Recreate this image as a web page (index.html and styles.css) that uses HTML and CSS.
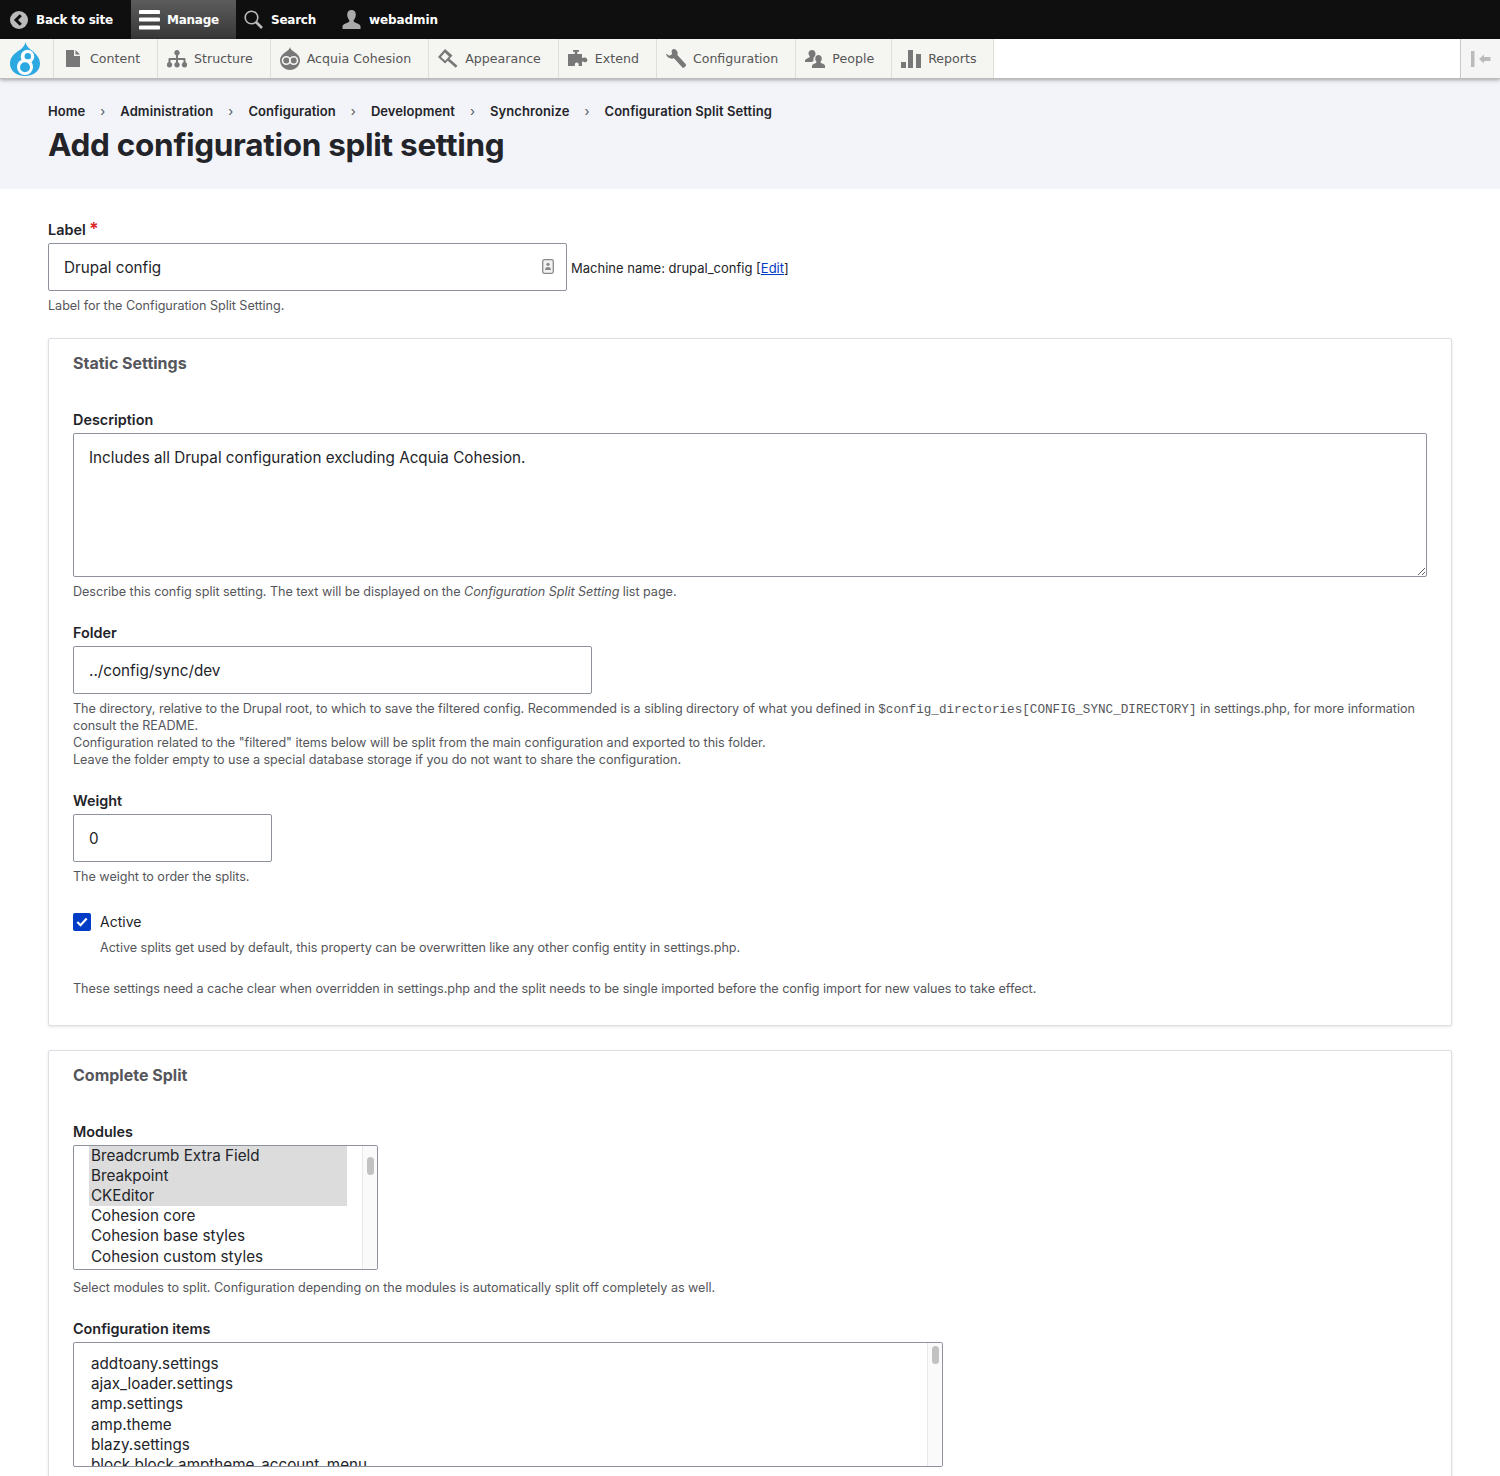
FILE: index.html
```html
<!DOCTYPE html>
<html lang="en">
<head>
    <meta charset="UTF-8">
    <meta name="viewport" content="width=device-width, initial-scale=1.0">
    <title>Add configuration split setting</title>
    <link rel="stylesheet" href="styles.css">
</head>
<body>
    <nav class="toolbar-bar">
        <a class="bar-item bar-back">
            <svg width="18" height="18" viewBox="0 0 18 18"><circle cx="9" cy="9" r="9" fill="#bbb"/><path d="M10.8 4.2 6 9l4.8 4.8" fill="none" stroke="#0f0f0f" stroke-width="3"/></svg>
            Back to site
        </a>
        <a class="bar-item bar-manage">
            <svg width="21" height="20" viewBox="0 0 21 20"><path d="M1.5 0h18a1.5 1.5 0 0 1 0 4h-18a1.5 1.5 0 0 1 0-4zM1.5 7.5h18a1.5 1.5 0 0 1 0 4h-18a1.5 1.5 0 0 1 0-4zM1.5 15.500h18a1.500 1.500 0 0 1 0 4h-18a1.500 1.500 0 0 1 0-4z" fill="#fff"/></svg>
            Manage
        </a>
        <a class="bar-item bar-search">
            <svg width="19" height="19" viewBox="0 0 19 19"><circle cx="7.500" cy="7.500" r="6.300" fill="none" stroke="#bbb" stroke-width="1.600"/><path d="m12 12 6 6" stroke="#bbb" stroke-width="2.600"/></svg>
            Search
        </a>
        <a class="bar-item bar-user">
            <svg width="19" height="20" viewBox="0 0 19 20"><path d="M9.500 0c2.700 0 4.300 2 4.300 4.800 0 2.300-1 4-2 5.200-.4.600-.3 1.500.4 1.900 2.500 1.200 5.800 2.300 6.300 4.100V19H.500v-3c.5-1.800 3.800-2.900 6.300-4.100.7-.4.800-1.300.4-1.900-1-1.200-2-2.900-2-5.200C5.200 2 6.800 0 9.500 0z" fill="#aaa"/></svg>
            webadmin
        </a>
    </nav>

    <nav class="toolbar-tray">
        <a class="tray-logo">
            <svg width="30" height="34" viewBox="0 0 30 34">
                <path d="M15.500 0c.6 4 3.500 6 7 9 3.700 3.200 7.500 7 7.500 12.500C30 28.800 23.500 34 15 34S0 28.800 0 21.500C0 15 5 11 9 8.500 12 6.500 14.800 4 15.500 0z" fill="#2ba9e0"/>
                <circle cx="17.500" cy="14.500" r="6.800" fill="#fff"/>
                <circle cx="17.800" cy="14.300" r="3.200" fill="#2ba9e0"/>
                <circle cx="15" cy="25" r="8" fill="#fff"/>
                <circle cx="15" cy="25.300" r="5" fill="#2ba9e0"/>
            </svg>
        </a>
        <a class="tray-item">
            <span class="tray-icon"><svg width="14" height="17" viewBox="0 0 14 17"><path d="M0 0h8v6h6v11H0zM9.500 0 14 4.500H9.500z" fill="#787878"/></svg></span>
            Content
        </a>
        <a class="tray-item">
            <span class="tray-icon"><svg width="20" height="18" viewBox="0 0 20 18"><path d="M10 0a2.700 2.700 0 0 1 1 5.200V8h6.500a1 1 0 0 1 1 1v3.300a2.700 2.700 0 1 1-2 0V10H11v2.300a2.700 2.700 0 1 1-2 0V10H3.500v2.300a2.700 2.700 0 1 1-2 0V9a1 1 0 0 1 1-1H9V5.200A2.700 2.700 0 0 1 10 0z" fill="#787878"/></svg></span>
            Structure
        </a>
        <a class="tray-item">
            <span class="tray-icon"><svg width="20" height="23" viewBox="0 0 20 23"><path d="M10 0c.5 2.500 2 3.500 4 4.800 3.500 2.200 6 5 6 8.200 0 5.700-4.500 10-10 10S0 18.700 0 13c0-3.200 2.500-6 6-8.200C8 3.500 9.500 2.500 10 0z" fill="#787878"/><circle cx="6.300" cy="13.500" r="3.800" fill="none" stroke="#f5f5f2" stroke-width="1.600"/><circle cx="13.700" cy="13.500" r="3.800" fill="none" stroke="#f5f5f2" stroke-width="1.600"/></svg></span>
            Acquia Cohesion
        </a>
        <a class="tray-item">
            <span class="tray-icon"><svg width="20" height="19" viewBox="0 0 20 19"><path d="M0 8 7 0l7.500 6.500-3 3.200 8 7-1.800 2-8-7-2.600 2.800zM3 8l4.200 3.700 3.800-4.300L6.800 3.600z" fill="#787878"/></svg></span>
            Appearance
        </a>
        <a class="tray-item">
            <span class="tray-icon"><svg width="20" height="18" viewBox="0 0 20 18"><path d="M5 0h6v1.800H9.300V4H14v3.500c.5 1.200 1.500-.5 3 0 2 .5 2.800 2.500 2.200 3.500-.7 1.500-3 1.500-4 .6-.5-.4-1.200-.2-1.200.4V16h-2.500c-1.500 0-.3-1.500-1-2.600-.8-1.200-2.900-1-3.500 0-.6 1.200.7 2.600-.5 2.600H0V4h6.700V1.800H5z" fill="#787878"/></svg></span>
            Extend
        </a>
        <a class="tray-item">
            <span class="tray-icon"><svg width="20" height="19" viewBox="0 0 20 19"><path d="M0 4.500 3.300 6.800 6 5.300 5.600 1.800 7 0c2.500-.2 4.300 1.400 4.600 3.600.1 1 0 1.600-.2 2.300L19.600 15c.6.700.5 1.600-.1 2.200l-1 1c-.7.700-1.700.7-2.300 0L8 9.300c-2 .7-4 .4-5.600-.8C1 7.500.2 6 0 4.500z" fill="#787878"/></svg></span>
            Configuration
        </a>
        <a class="tray-item">
            <span class="tray-icon"><svg width="20" height="18" viewBox="0 0 20 18"><path d="M7 0c2.200 0 3.500 1.700 3.500 3.700 0 1-.3 2-.8 2.700-1.200 1-1.600 2.500-1 4-.3.600-1 1-1.800 1.600H0v-1.700c.4-1.300 2.700-2 4.300-2.800.5-.3.500-1 .2-1.400-.7-.8-1-1.700-1-2.800C3.500 1.700 4.800 0 7 0zM13.500 5c2 0 3.300 1.600 3.300 3.500 0 1.300-.5 2.300-1.100 3.100-.3.500-.2 1.100.3 1.400 1.500.7 3.600 1.300 4 2.500V18H7v-2.500c.4-1.200 2.500-1.800 4-2.500.5-.3.600-.9.300-1.400-.6-.8-1.100-1.800-1.100-3.100C10.200 6.600 11.500 5 13.500 5z" fill="#787878"/></svg></span>
            People
        </a>
        <a class="tray-item">
            <span class="tray-icon"><svg width="20" height="18" viewBox="0 0 20 18"><path d="M0 12h5v6H0zM7 0h5v18H7zM15 4h5v14h-5z" fill="#787878"/></svg></span>
            Reports
        </a>
        <a class="tray-toggle">
            <svg width="20" height="16" viewBox="0 0 20 16"><path d="M0 0h3.500v16H0zM8 8l5-4.500V6h6.500v4H13v2.500z" fill="#bbb"/></svg>
        </a>
    </nav>

    <header class="page-header">
        <ol class="breadcrumb">
            <li>Home</li>
            <li>Administration</li>
            <li>Configuration</li>
            <li>Development</li>
            <li>Synchronize</li>
            <li>Configuration Split Setting</li>
        </ol>
        <h1>Add configuration split setting</h1>
    </header>

    <main class="content">
        <div class="form-item form-item-label">
            <label class="form-label">Label <span class="required">*</span></label>
            <div class="inline-field">
                <div class="input-wrap">
                    <input class="form-text form-text-wide" type="text" value="Drupal config">
                    <svg class="contact-icon" width="12" height="15" viewBox="0 0 12 15"><rect x=".7" y=".7" width="10.600" height="13.600" rx="1.500" fill="#f2f2f2" stroke="#8a8a8a" stroke-width="1.300"/><circle cx="6" cy="5.300" r="1.600" fill="#8a8a8a"/><path d="M3 11c0-2 1.300-3 3-3s3 1 3 3z" fill="#8a8a8a"/></svg>
                </div>
                <span class="machine-name">Machine name: drupal_config [<a href="#">Edit</a>]</span>
            </div>
            <div class="help">Label for the Configuration Split Setting.</div>
        </div>

        <section class="card">
            <h2 class="card-title">Static Settings</h2>

            <div class="form-item form-item-first">
                <label class="form-label">Description</label>
                <textarea class="form-textarea">Includes all Drupal configuration excluding Acquia Cohesion.</textarea>
                <div class="help">Describe this config split setting. The text will be displayed on the <em>Configuration Split Setting</em> list page.</div>
            </div>

            <div class="form-item">
                <label class="form-label">Folder</label>
                <input class="form-text form-text-wide" type="text" value="../config/sync/dev">
                <div class="help">The directory, relative to the Drupal root, to which to save the filtered config. Recommended is a sibling directory of what you defined in <code>$config_directories[CONFIG_SYNC_DIRECTORY]</code> in settings.php, for more information consult the README.<br>
                Configuration related to the "filtered" items below will be split from the main configuration and exported to this folder.<br>
                Leave the folder empty to use a special database storage if you do not want to share the configuration.</div>
            </div>

            <div class="form-item">
                <label class="form-label">Weight</label>
                <input class="form-text form-text-small" type="text" value="0">
                <div class="help">The weight to order the splits.</div>
            </div>

            <div class="form-check">
                <span class="check-box"><svg width="12" height="10" viewBox="0 0 12 10"><path d="m1.300 5 3.200 3.200 6.200-6.700" fill="none" stroke="#fff" stroke-width="2.200"/></svg></span>
                <span class="check-label">Active</span>
            </div>
            <div class="help help-check">Active splits get used by default, this property can be overwritten like any other config entity in settings.php.</div>

            <div class="help help-note">These settings need a cache clear when overridden in settings.php and the split needs to be single imported before the config import for new values to take effect.</div>
        </section>

        <section class="card">
            <h2 class="card-title">Complete Split</h2>

            <div class="form-item form-item-first">
                <label class="form-label">Modules</label>
                <div class="fake-select fake-select-modules">
                    <ul>
                        <li class="selected">Breadcrumb Extra Field</li>
                        <li class="selected">Breakpoint</li>
                        <li class="selected">CKEditor</li>
                        <li>Cohesion core</li>
                        <li>Cohesion base styles</li>
                        <li>Cohesion custom styles</li>
                    </ul>
                    <div class="fake-scroll"><span class="fake-thumb"></span></div>
                </div>
                <div class="help help-select">Select modules to split. Configuration depending on the modules is automatically split off completely as well.</div>
            </div>

            <div class="form-item">
                <label class="form-label">Configuration items</label>
                <div class="fake-select fake-select-items">
                    <ul>
                        <li>addtoany.settings</li>
                        <li>ajax_loader.settings</li>
                        <li>amp.settings</li>
                        <li>amp.theme</li>
                        <li>blazy.settings</li>
                        <li>block.block.amptheme_account_menu</li>
                    </ul>
                    <div class="fake-scroll"><span class="fake-thumb"></span></div>
                </div>
            </div>
        </section>
    </main>
</body>
</html>
```

FILE: styles.css
```css
* {
    box-sizing: border-box;
}
html, body {
    margin: 0;
    padding: 0;
    height: 1476px;
    overflow: hidden;
}
body {
    font-family: Inter, "Liberation Sans", Arial, sans-serif;
    color: #232429;
    background: #fff;
}

/* toolbar */
.toolbar-bar {
    display: flex;
    height: 39px;
    background: #0f0f0f;
    color: #fff;
    font-family: "DejaVu Sans", Verdana, sans-serif;
    font-size: 12px;
    font-weight: bold;
    letter-spacing: -0.25px;
}
.bar-item {
    display: flex;
    align-items: center;
}
.bar-back {
    padding-left: 10px;
    width: 131px;
    gap: 8px;
}
.bar-manage {
    width: 105px;
    padding-left: 8px;
    gap: 7px;
    background: linear-gradient(#5c5c5c, #373737);
}
.bar-search {
    padding-left: 8px;
    width: 106px;
    gap: 8px;
}
.bar-user {
    gap: 8px;
    letter-spacing: -0.1px;
}
.toolbar-tray {
    display: flex;
    position: relative;
    height: 40px;
    background: #fff;
    border-bottom: 1px solid #bbb;
    box-shadow: 0 1px 4px rgba(0, 0, 0, 0.35);
    font-family: "DejaVu Sans", Verdana, sans-serif;
    font-size: 12.600px;
    color: #565656;
}
.tray-logo, .tray-item {
    display: flex;
    align-items: center;
    background: #f5f5f2;
    border-right: 1px solid #dfdfda;
}
.tray-logo {
    width: 54px;
    padding-left: 10px;
}
.tray-item {
    padding: 0 17px 0 7px;
    gap: 5px;
}
.tray-icon {
    display: flex;
    justify-content: center;
    align-items: center;
    width: 24px;
}
.tray-toggle {
    display: flex;
    align-items: center;
    justify-content: center;
    width: 40px;
    margin-left: auto;
    background: #f5f5f5;
    border-left: 1px solid #c9c9c9;
}

/* header */
.page-header {
    height: 110px;
    padding: 22px 48px 0;
    background: #f3f4f9;
}
.breadcrumb {
    display: flex;
    margin: 0;
    padding: 0;
    list-style: none;
    font-size: 13px;
    line-height: 20px;
    font-weight: 600;
    letter-spacing: 0.08px;
    color: #232429;
}
.breadcrumb li + li::before {
    content: "\203A";
    display: inline-block;
    width: 35px;
    text-align: center;
    font-weight: 400;
    color: #55565b;
}
h1 {
    margin: 5px 0 0;
    font-size: 31.500px;
    line-height: 38px;
    font-weight: 700;
    letter-spacing: -0.29px;
    color: #232429;
}

/* form */
.content {
    padding: 32px 48px 0;
}
.form-label {
    display: block;
    margin-bottom: 4px;
    font-size: 14.400px;
    line-height: 18px;
    font-weight: 600;
    color: #232429;
}
.form-item {
    margin-top: 24px;
}
.form-item-label {
    margin-top: 0;
}
.form-item-first {
    margin-top: 0;
}
.required {
    font-size: 17px;
    line-height: 14px;
    color: #dc2323;
}
.form-text, .form-textarea {
    display: block;
    height: 48px;
    padding: 0 15px;
    font-family: inherit;
    font-size: 15.230px;
    color: #232429;
    background: #fff;
    border: 1px solid #8e929c;
    border-radius: 2px;
    outline: none;
}
.form-text-wide {
    width: 519px;
}
.form-text-small {
    width: 199px;
}
.form-textarea {
    width: 100%;
    height: 144px;
    padding: 13px 15px;
    line-height: 22px;
    resize: vertical;
}
.inline-field {
    display: flex;
    align-items: center;
    gap: 4px;
}
.input-wrap {
    position: relative;
}
.contact-icon {
    position: absolute;
    top: 16px;
    right: 13px;
}
.machine-name {
    margin-top: 2px;
    font-size: 13px;
    color: #232429;
}
.machine-name a {
    color: #003cc5;
}
.help {
    margin-top: 6px;
    font-size: 12.640px;
    line-height: 17px;
    letter-spacing: -0.05px;
    color: #55565b;
}
.help code {
    font-family: "Liberation Mono", "Courier New", monospace;
    font-size: 12.640px;
    line-height: 1;
    letter-spacing: 0;
}
.help-select {
    margin-top: 9px;
}

/* card */
.card {
    margin-top: 24px;
    padding: 0 24px 28px;
    background: #fff;
    border: 1px solid #dedfe4;
    border-radius: 2px;
    box-shadow: 0 1px 3px rgba(0, 0, 0, 0.1);
}
.card-title {
    margin: 14px 0 38px;
    font-size: 16px;
    line-height: 20px;
    font-weight: 700;
    color: #55565b;
}
.form-check {
    display: flex;
    align-items: center;
    gap: 9px;
    margin-top: 28px;
}
.check-box {
    display: flex;
    align-items: center;
    justify-content: center;
    width: 18px;
    height: 18px;
    background: #003cc5;
    border-radius: 2px;
}
.check-label {
    font-size: 14px;
    line-height: 18px;
}
.help-check {
    margin-top: 8px;
    margin-left: 27px;
}
.help-note {
    margin-top: 24px;
}

/* multi selects, drawn with lists so the scrollbar stays visible */
.fake-select {
    display: flex;
    height: 125px;
    overflow: hidden;
    border: 1px solid #8e929c;
    border-radius: 2px;
    font-size: 15.230px;
    line-height: 20.200px;
}
.fake-select ul {
    flex: 1;
    margin: 0;
    padding: 0 15px;
    list-style: none;
}
.fake-select li {
    padding-left: 2px;
    white-space: nowrap;
}
.fake-select li.selected {
    background: #dcdcdc;
}
.fake-select-modules {
    width: 305px;
}
.fake-select-modules ul {
    margin-top: -0.500px;
}
.fake-select-items {
    width: 870px;
}
.fake-select-items ul {
    padding-top: 11px;
}
.fake-scroll {
    flex: none;
    width: 15px;
    padding: 11px 3px 0 4px;
    background: #fafafa;
    border-left: 1px solid #e8e8e8;
}
.fake-select-items .fake-scroll {
    padding-top: 3px;
}
.fake-thumb {
    display: block;
    height: 18px;
    background: #c2c2c2;
    border-radius: 4px;
}
```
